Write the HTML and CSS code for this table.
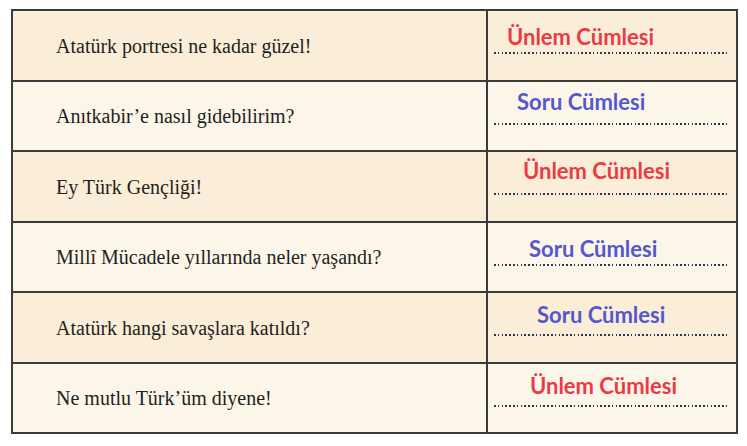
FILE: index.html
```html
<!DOCTYPE html>
<html lang="tr">
<head>
<meta charset="utf-8">
<title>Cümleler</title>
<link rel="stylesheet" href="styles.css">
</head>
<body>
<div class="sheet">
  <div class="cell q odd">Atatürk portresi ne kadar güzel!</div>
  <div class="cell a odd"><span class="label red p1">Ünlem Cümlesi</span><span class="dots"></span></div>

  <div class="cell q even">Anıtkabir’e nasıl gidebilirim?</div>
  <div class="cell a even"><span class="label blue p2">Soru Cümlesi</span><span class="dots"></span></div>

  <div class="cell q odd">Ey Türk Gençliği!</div>
  <div class="cell a odd"><span class="label red p3">Ünlem Cümlesi</span><span class="dots"></span></div>

  <div class="cell q even">Millî Mücadele yıllarında neler yaşandı?</div>
  <div class="cell a even"><span class="label blue p4">Soru Cümlesi</span><span class="dots"></span></div>

  <div class="cell q odd">Atatürk hangi savaşlara katıldı?</div>
  <div class="cell a odd"><span class="label blue p5">Soru Cümlesi</span><span class="dots"></span></div>

  <div class="cell q even">Ne mutlu Türk’üm diyene!</div>
  <div class="cell a even"><span class="label red p6">Ünlem Cümlesi</span><span class="dots"></span></div>
</div>
</body>
</html>
```
FILE: styles.css
```css
html, body {
  margin: 0;
  padding: 0;
  background: #ffffff;
}

body {
  padding: 9px 0 0 11px;
}

.sheet {
  display: grid;
  grid-template-columns: 473px 248px;
  grid-template-rows: repeat(6, 68.5px);
  gap: 2px;
  padding: 2px;
  width: max-content;
  background: #3b3b3b;
}

.cell.odd { background: #fbeed9; }
.cell.even { background: #fcf6ea; }

.q {
  display: flex;
  align-items: center;
  padding: 2px 0 0 43px;
  font-family: "Liberation Serif", "Times New Roman", serif;
  font-size: 20px;
  color: #231f20;
}

.a {
  display: grid;
  grid-template-rows: 41px 2px;
  align-content: start;
}

.label {
  align-self: end;
  font-family: Lato, "Open Sans", sans-serif;
  font-weight: 700;
  font-size: 22px;
  line-height: 28px;
  white-space: nowrap;
}

.red { color: #ec3a44; }
.blue { color: #5558cc; }

.p1 { margin: 0 0 1px 19px; }
.p2 { margin: 0 0 7px 29px; }
.p3 { margin: 0 0 8px 35px; }
.p4 { margin: 0 0 1px 41px; }
.p5 { margin: 0 0 5px 49px; }
.p6 { margin: 0 0 5px 42px; }

.dots {
  display: block;
  margin-left: 6px;
  width: 233px;
  height: 2px;
  background: repeating-linear-gradient(90deg, #2c3852 0 1.6px, transparent 1.6px 3.8px);
}
```
